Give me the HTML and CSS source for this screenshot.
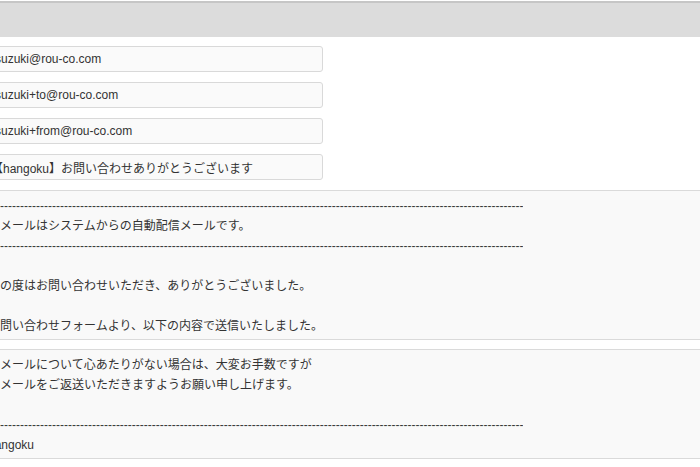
FILE: index.html
```html
<!DOCTYPE html>
<html lang="ja">
<head>
<meta charset="utf-8">
<title>メール確認</title>
<link rel="stylesheet" href="styles.css">
</head>
<body>
<div class="page">
  <div class="header"></div>
  <div class="fields">
    <input class="field" type="text" value="suzuki@rou-co.com" readonly>
    <input class="field" type="text" value="suzuki+to@rou-co.com" readonly>
    <input class="field" type="text" value="suzuki+from@rou-co.com" readonly>
    <input class="field field-subject" type="text" value="【hangoku】お問い合わせありがとうございます" readonly>
  </div>
  <div class="box box-main">
    <div class="line dash">----------------------------------------------------------------------------------------------------------------------------------------</div>
    <div class="line">本メールはシステムからの自動配信メールです。</div>
    <div class="line dash">----------------------------------------------------------------------------------------------------------------------------------------</div>
    <div class="line">&nbsp;</div>
    <div class="line">この度はお問い合わせいただき、ありがとうございました。</div>
    <div class="line">&nbsp;</div>
    <div class="line">お問い合わせフォームより、以下の内容で送信いたしました。</div>
  </div>
  <div class="box box-foot">
    <div class="line">本メールについて心あたりがない場合は、大変お手数ですが</div>
    <div class="line">本メールをご返送いただきますようお願い申し上げます。</div>
    <div class="line">&nbsp;</div>
    <div class="line dash">----------------------------------------------------------------------------------------------------------------------------------------</div>
    <div class="line">hangoku</div>
  </div>
</div>
</body>
</html>
```

FILE: styles.css
```css
html, body {
  margin: 0;
  padding: 0;
  background: #ffffff;
  overflow: hidden;
}

body {
  font-family: "Liberation Sans", "Noto Sans CJK JP", sans-serif;
  font-size: 12px;
  color: #333333;
}

.page {
  width: 700px;
  padding-top: 1px;
}

.header {
  height: 34px;
  background: #dcdcdc;
  border-top: 2px solid #c6c6c6;
}

.fields {
  display: flex;
  flex-direction: column;
  gap: 10px;
  margin: 9px 0 10px -20px;
  width: 343px;
}

.field {
  display: block;
  box-sizing: border-box;
  height: 26px;
  width: 100%;
  margin: 0;
  padding: 0 0 0 14px;
  border: 1px solid #d9d9d9;
  border-radius: 3px;
  background: #fafafa;
  font: inherit;
  color: #333333;
  outline: none;
}

.field-subject {
  padding-left: 10px;
}

.box {
  margin-left: -12px;
  width: 740px;
  background: #f9f9f9;
  border-top: 1px solid #dadada;
  border-bottom: 1px solid #dadada;
  box-sizing: border-box;
}

.box-main {
  padding: 5px 0 3px 0;
}

.box-foot {
  margin-top: 9px;
  padding: 5px 0 3px 0;
}

.line {
  height: 20px;
  line-height: 20px;
  white-space: nowrap;
  overflow: hidden;
}

.dash {
  color: #3a3a3a;
  width: 535px;
}
```
